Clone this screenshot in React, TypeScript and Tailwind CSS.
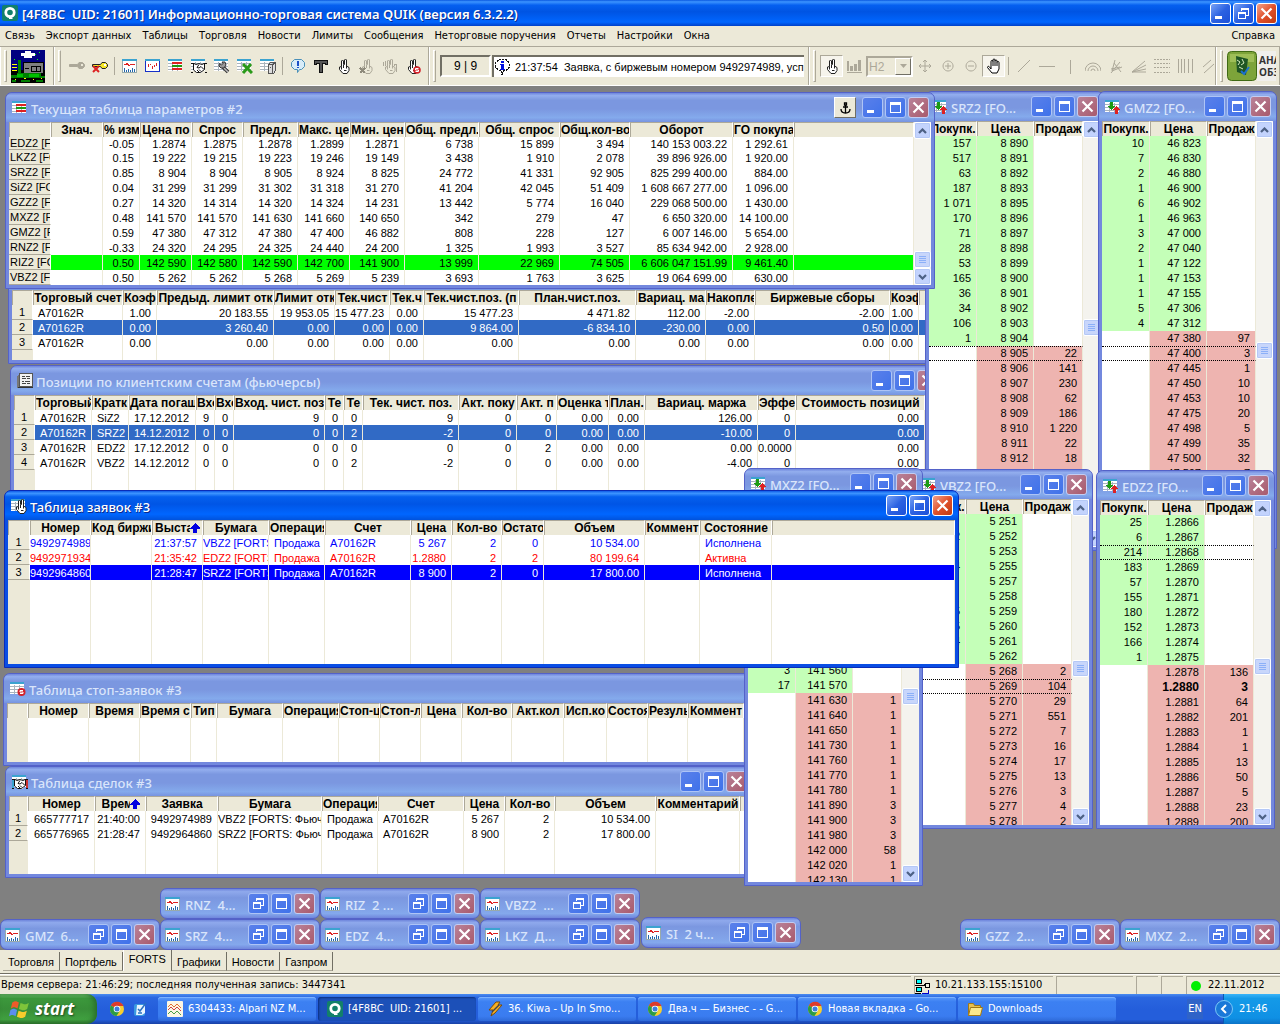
import type { ReactNode } from "react";

type Align = "left" | "right" | "flush";
type Col = { label: ReactNode; w: string; align?: Align };
type Row = { cells: string[]; tone?: string };

const UI = "font-['DejaVu_Sans_Condensed','Noto_Sans',sans-serif]";
const GRID = "font-['Liberation_Sans',Arial,sans-serif]";

/* ---------- icons ---------- */

function Svg({ children, s = "size-4", vb = "0 0 16 16" }: { children: ReactNode; s?: string; vb?: string }) {
  return (
    <svg viewBox={vb} className={`${s} shrink-0`} fill="none" shapeRendering="crispEdges" aria-hidden>
      {children}
    </svg>
  );
}

function Sheet() {
  return (
    <>
      <path fill="#fff" d="M0 1h14v12H0z" />
      <path fill="#3ba3d0" d="M0 1h14v2H0z" />
      <path stroke="#a9b4bd" d="M0 5.500h14M0 8.500h14M0 11.500h14M4.500 4v9M9.500 4v9" />
    </>
  );
}

const ParamsIcon = () => (
  <Svg>
    <Sheet />
    <path fill="#d22" d="M4 4h10v2H4zM4 10h10v2H4z" />
    <path fill="#1c9a12" d="M4 7h10v2H4z" />
  </Svg>
);

const ChartIcon = () => (
  <Svg>
    <path fill="#fff" stroke="#9aa" d="M.5 1.500h14v13H.5z" />
    <path fill="#3ba3d0" d="M0 1h15v2H0z" />
    <path stroke="#d22" d="M2 6.500h2l1-1 2 2 2-1h4" />
    <path stroke="#26a" d="M2.500 10v4M4.500 12v2M6.500 11v3M8.500 12v2M10.500 10v4M12.500 11v3" />
  </Svg>
);

const QuoteIcon = () => (
  <Svg>
    <Sheet />
    <path fill="#1c9a12" d="M5 3h3v4h2l-3.500 4L3 7h2z" />
    <path fill="#d22" d="M10 15h3v-4h2l-3.500-4L8 11h2z" />
  </Svg>
);

const PositionsIcon = () => (
  <Svg>
    <path fill="#777" d="M0 3l3-3v12l-3 4z" />
    <path fill="#333" d="M0 15l3-2h13v2z" />
    <path fill="#f2f2f2" stroke="#555" d="M2.500.5h13v13h-13z" />
    <path stroke="#444" d="M5 3.500h3M9 3.500h4M5 5.500h4M10 5.500h3M5 8.500h2M8 8.500h5M5 10.500h4M10 10.500h3" />
  </Svg>
);

const Fingers = ({ fill = "#fff", stroke = "#222" }: { fill?: string; stroke?: string }) => (
  <>
    <path
      fill={fill}
      stroke={stroke}
      shapeRendering="auto"
      d="M5.500 8.500V3l1-1 1 1v3.500h1V2l1-1 1 1v6l2.500 1.500v3L11 15.500H7L3.500 11.500V9z"
    />
    <path stroke={stroke} shapeRendering="auto" d="M5.500 8.500v3M7.500 7v3M10.500 8v2.500M8 12.500h2.500" />
  </>
);

const OrdersIcon = () => (
  <Svg>
    <Sheet />
    <g transform="translate(2 0)">
      <Fingers />
    </g>
  </Svg>
);

const StopIcon = () => (
  <Svg>
    <Sheet />
    <circle cx="11.500" cy="11" r="4" fill="#d3222a" shapeRendering="auto" />
    <path stroke="#fff" d="M13 9.500h-3v1.500h3v1.500h-3" shapeRendering="auto" />
  </Svg>
);

const DealIcon = ({ bare = false }: { bare?: boolean }) => (
  <Svg>
    <Sheet />
    <path fill="#fff" d="M2 7l3-1 3-1 3 1 3 1v5l-4 3H6l-4-3z" />
    <path
      stroke="#111"
      shapeRendering="auto"
      d="M0 5.500h3l2 1 3-1 3 1 2-1h3M0 14.500h2M14 14.500h2M2.500 6v6l3 2.500h4l4-3V6M8 6.500l-2 3 2 .5 2-1.500 3 3M6 12l2 2M8 11.500l2 2"
    />
    {!bare && <path fill="#3ba3d0" d="M0 6h2v8H0z" />}
    {!bare && <path fill="#c33" d="M14 6h2v8h-2z" />}
  </Svg>
);

const Key = ({ color, x = false }: { color: string; x?: boolean }) => (
  <Svg s="size-[18px]" vb="0 0 18 18">
    <path fill={color} stroke={x ? "#222" : color} shapeRendering="auto" d="M11 5.500h3.500l2 2v2l-2 2H11L9.500 9.500h-8v-2h8z" />
    <path fill={x ? "#fff" : "#ece9d8"} d="M13 7h2v2h-2z" />
    {x && <path stroke="#d22" strokeWidth="2" shapeRendering="auto" d="M2 9l6 6M8 9l-6 6" />}
  </Svg>
);

const ToolHand = ({ fill, stroke, children }: { fill?: string; stroke?: string; children?: ReactNode }) => (
  <Svg>
    <Fingers fill={fill} stroke={stroke} />
    {children}
  </Svg>
);

const Chrome = () => (
  <svg viewBox="0 0 16 16" className="size-4 shrink-0" aria-hidden>
    <circle cx="8" cy="8" r="7" fill="#f7cf2f" />
    <path d="M8 8L1.900 4.500A7 7 0 0 1 14.500 5H8z" fill="#dd3b2b" />
    <path d="M8 8L1.900 4.500A7 7 0 0 0 7.500 15L11 9.500z" fill="#2c9c46" />
    <circle cx="8" cy="8" r="3.300" fill="#fff" />
    <circle cx="8" cy="8" r="2.500" fill="#3c7ee0" />
  </svg>
);

const Quik = () => (
  <svg viewBox="0 0 16 16" className="size-4 shrink-0" aria-hidden>
    <rect width="16" height="16" rx="2" fill="#12806a" />
    <circle cx="8" cy="7.500" r="4.200" fill="none" stroke="#fff" strokeWidth="2.800" />
    <path d="M7 10l4 4H7z" fill="#fff" />
  </svg>
);

/* ---------- window chrome ---------- */

type Glyph = "min" | "max" | "restore" | "close";
const glyphNames = { min: "Свернуть", max: "Развернуть", restore: "Восстановить", close: "Закрыть" };

function WinButton({ kind, active = false }: { kind: Glyph; active?: boolean }) {
  const tone =
    kind === "close"
      ? active
        ? "border-white bg-linear-to-br from-[#f0a088] via-[#e0502a] to-[#c03a10]"
        : "border-[#c3cdf3] bg-linear-to-br from-[#b98299] to-[#a85a6c]"
      : active
        ? "border-white bg-linear-to-br from-[#7aa2f5] via-[#2c62e2] to-[#1c50d8]"
        : "border-[#aec4f6] bg-linear-to-br from-[#5a80ea] to-[#3f72ea]";
  return (
    <button
      type="button"
      aria-label={glyphNames[kind]}
      className={`flex size-[21px] shrink-0 items-center justify-center rounded-[3px] border ${tone}`}
    >
      <svg viewBox="0 0 19 19" className="size-[19px]" fill="none" stroke="#fff" aria-hidden>
        {kind === "min" && <path strokeWidth="3" d="M4 13.500h7" />}
        {kind === "max" && <path strokeWidth="1" shapeRendering="crispEdges" d="M4.500 4.500h10v10h-10zM4 5.500h11M4 6.500h11" />}
        {kind === "restore" && (
          <path strokeWidth="1" shapeRendering="crispEdges" d="M7.500 7V4.500h7v7H12M7 5.500h8M4.500 8.500h7v6h-7zM4 9.500h8" />
        )}
        {kind === "close" && <path strokeWidth="2.200" d="M4.500 4.500l10 10M14.500 4.500l-10 10" />}
      </svg>
    </button>
  );
}

type WindowProps = {
  title: string;
  icon: ReactNode;
  place: string;
  active?: boolean;
  buttons?: Glyph[];
  extra?: ReactNode;
  children: ReactNode;
};

function MdiWindow({ title, icon, place, active = false, buttons = ["min", "max", "close"], extra, children }: WindowProps) {
  const frame = active ? "border-[#0a2cb8] bg-[#0a4ee4]" : "border-[#5462c8] bg-[#7388de]";
  const bar = active
    ? "bg-[linear-gradient(#0f5be8,#3d95ff_8%,#0560ee_20%,#0055e5_45%,#0066ff_80%,#0052dc)] text-white [text-shadow:1px_1px_#0a2a8c]"
    : "bg-[linear-gradient(#6f86dc,#93aeee_9%,#7b97e0_25%,#7b97e0_55%,#84aaec_85%,#7793e0)] text-[#d9e5fb]";
  return (
    <section className={`absolute flex flex-col overflow-hidden rounded-t-[7px] border ${frame} ${place}`}>
      <header className={`flex h-[29px] shrink-0 items-center gap-[2px] pr-[5px] pl-[6px] ${bar}`}>
        {icon}
        <h2 className="ml-px min-w-0 flex-1 overflow-hidden pt-[2px] font-['Noto_Sans',sans-serif] text-[13px] leading-[20px] font-medium whitespace-pre">
          {title}
        </h2>
        {extra}
        {buttons.map((b) => (
          <WinButton key={b} kind={b} active={active} />
        ))}
      </header>
      <div className="mx-[3px] mb-[3px] flex min-h-0 flex-1 overflow-hidden bg-white">{children}</div>
    </section>
  );
}

function Minimized({ title, place }: { title: string; place: string }) {
  return (
    <section
      className={`absolute flex h-[31px] w-[160px] items-center gap-[2px] rounded-[7px] border border-[#5462c8] bg-[linear-gradient(#6f86dc,#8fa9ec_9%,#7b97e0_30%,#84a8ec_85%,#7086dc)] pr-[4px] pl-[4px] ${place}`}
    >
      <ChartIcon />
      <h2 className="ml-[2px] min-w-0 flex-1 overflow-hidden pt-[2px] font-['Noto_Sans',sans-serif] text-[13px] leading-[20px] font-medium whitespace-pre text-[#d9e5fb]">
        {title}
      </h2>
      <WinButton kind="restore" />
      <WinButton kind="max" />
      <WinButton kind="close" />
    </section>
  );
}

function ScrollArrow({ down = false }: { down?: boolean }) {
  return (
    <button
      type="button"
      aria-label={down ? "Вниз" : "Вверх"}
      className="flex h-[17px] w-full shrink-0 items-center justify-center rounded-[2px] border border-white bg-[#c3d3fd] shadow-[inset_0_0_0_1px_#b4c8f6]"
    >
      <svg viewBox="0 0 9 6" className="h-[6px] w-[9px]" fill="none" stroke="#4d6185" strokeWidth="2.200" aria-hidden>
        <path d={down ? "M1 1l3.500 3.500L8 1" : "M1 5l3.500-3.500L8 5"} />
      </svg>
    </button>
  );
}

function ScrollBar({ lead }: { lead: string }) {
  return (
    <div className="flex w-[17px] shrink-0 flex-col bg-[#f4f3ee]">
      <ScrollArrow />
      <div className={`shrink-0 ${lead}`} />
      <div className="flex h-[17px] shrink-0 flex-col items-center justify-center gap-px rounded-[2px] border border-white bg-[#c8d6fb] shadow-[inset_0_0_0_1px_#b4c8f6]">
        <i className="h-px w-[7px] bg-[#8cb0f8]" />
        <i className="h-px w-[7px] bg-[#8cb0f8]" />
        <i className="h-px w-[7px] bg-[#8cb0f8]" />
        <i className="h-px w-[7px] bg-[#8cb0f8]" />
      </div>
      <div className="min-h-0 flex-1" />
      <ScrollArrow down />
    </div>
  );
}

/* ---------- tables ---------- */

const headCell =
  "h-[15px] overflow-hidden border-t border-l border-r border-t-[#aca899] border-l-[#aca899] border-r-white bg-[#ece9d8] p-0 text-center text-[12px] leading-[13px] font-bold whitespace-pre text-black";

const cellAlign: Record<Align, string> = {
  left: "pl-[5px] text-left",
  right: "pr-[5px] text-right",
  flush: "text-left",
};

function DataTable({ cols, rows, named = false }: { cols: Col[]; rows: Row[]; named?: boolean }) {
  return (
    <table className={`h-full w-full min-w-0 flex-1 table-fixed border-separate border-spacing-0 text-[11px] ${GRID}`}>
      <colgroup>
        {cols.map((c, i) => (
          <col key={i} className={c.w} />
        ))}
      </colgroup>
      <thead>
        <tr>
          {cols.map((c, i) => (
            <th key={i} scope="col" className={headCell}>
              {c.label}
            </th>
          ))}
        </tr>
      </thead>
      <tbody>
        {rows.map((r, ri) => (
          <tr
            key={ri}
            className={`${named && ri === 0 ? "h-[13px] leading-[12px]" : "h-[15px] leading-[14px]"} ${r.tone ?? "text-black"}`}
          >
            <th
              scope="row"
              className={`overflow-hidden border-r border-b border-r-white border-b-[#aca899] bg-[#ece9d8] p-0 font-normal whitespace-pre text-black ${
                named ? "pl-px text-left" : "text-center"
              }`}
            >
              {named ? r.cells[0] : ri + 1}
            </th>
            {cols.slice(1).map((c, ci) => (
              <td
                key={ci}
                className={`overflow-hidden border-r border-[#ece9d8] p-0 whitespace-pre ${cellAlign[c.align ?? "right"]}`}
              >
                {r.cells[named ? ci + 1 : ci] ?? ""}
              </td>
            ))}
          </tr>
        ))}
        <tr aria-hidden>
          {cols.map((_, i) => (
            <td key={i} className={i === 0 ? "bg-[#ece9d8] p-0" : "border-r border-[#ece9d8] p-0"} />
          ))}
        </tr>
      </tbody>
    </table>
  );
}

function Sorted({ text, w }: { text: string; w: string }) {
  return (
    <span className="flex items-center justify-center">
      <span className={`overflow-hidden ${w}`}>{text}</span>
      <Svg s="size-[10px]" vb="0 0 10 10">
        <path fill="#0000e0" d="M5 0l5 5v1H7v4H3V6H0V5z" />
      </Svg>
    </span>
  );
}

const paramCols: Col[] = [
  { label: "", w: "w-[42px]" },
  { label: "Знач.", w: "w-[52px]" },
  { label: "% изм", w: "w-[37px]" },
  { label: "Цена по", w: "w-[52px]" },
  { label: "Спрос", w: "w-[51px]" },
  { label: "Предл.", w: "w-[55px]" },
  { label: "Макс. це", w: "w-[52px]" },
  { label: "Мин. цен", w: "w-[55px]" },
  { label: "Общ. предл.", w: "w-[74px]" },
  { label: "Общ. спрос", w: "w-[81px]" },
  { label: "Общ.кол-во", w: "w-[70px]" },
  { label: "Оборот", w: "w-[103px]" },
  { label: "ГО покупа", w: "w-[61px]" },
  { label: "", w: "w-auto" },
];

const paramRows: Row[] = [
  ["EDZ2 [FO", "", "-0.05", "1.2874", "1.2875", "1.2878", "1.2899", "1.2871", "6 738", "15 899", "3 494", "140 153 003.22", "1 292.61"],
  ["LKZ2 [FO", "", "0.15", "19 222", "19 215", "19 223", "19 246", "19 149", "3 438", "1 910", "2 078", "39 896 926.00", "1 920.00"],
  ["SRZ2 [FO", "", "0.85", "8 904", "8 904", "8 905", "8 924", "8 825", "24 772", "41 331", "92 905", "825 299 400.00", "884.00"],
  ["SiZ2 [FO", "", "0.04", "31 299", "31 299", "31 302", "31 318", "31 270", "41 204", "42 045", "51 409", "1 608 667 277.00", "1 096.00"],
  ["GZZ2 [FO", "", "0.27", "14 320", "14 314", "14 320", "14 324", "14 231", "13 442", "5 774", "16 040", "229 068 500.00", "1 430.00"],
  ["MXZ2 [FO", "", "0.48", "141 570", "141 570", "141 630", "141 660", "140 650", "342", "279", "47", "6 650 320.00", "14 100.00"],
  ["GMZ2 [FO", "", "0.59", "47 380", "47 312", "47 380", "47 400", "46 882", "808", "228", "127", "6 007 146.00", "5 654.00"],
  ["RNZ2 [FO", "", "-0.33", "24 320", "24 295", "24 325", "24 440", "24 200", "1 325", "1 993", "3 527", "85 634 942.00", "2 928.00"],
  ["RIZ2 [FO", "", "0.50", "142 590", "142 580", "142 590", "142 700", "141 900", "13 999", "22 969", "74 505", "6 606 047 151.99", "9 461.40"],
  ["VBZ2 [FO", "", "0.50", "5 262", "5 262", "5 268", "5 269", "5 239", "3 693", "1 763", "3 625", "19 064 699.00", "630.00"],
].map((cells, i) => ({ cells, tone: i === 8 ? "bg-[#00ff00]" : undefined }));

const limitCols: Col[] = [
  { label: "", w: "w-[21px]" },
  { label: "Торговый счет", w: "w-[90px]", align: "left" },
  { label: "Коэф", w: "w-[34px]" },
  { label: "Предыд. лимит отк", w: "w-[117px]" },
  { label: "Лимит отк", w: "w-[61px]" },
  { label: "Тек.чист", w: "w-[55px]" },
  { label: "Тек.ч", w: "w-[34px]" },
  { label: "Тек.чист.поз. (п", w: "w-[95px]" },
  { label: "План.чист.поз.", w: "w-[117px]" },
  { label: "Вариац. ма", w: "w-[70px]" },
  { label: "Накопле", w: "w-[49px]" },
  { label: "Биржевые сборы", w: "w-[135px]" },
  { label: "Коэф", w: "w-[29px]" },
  { label: "", w: "w-auto" },
];

const limitRows: Row[] = [
  { cells: ["A70162R", "1.00", "20 183.55", "19 953.05", "15 477.23", "0.00", "15 477.23", "4 471.82", "112.00", "-2.00", "-2.00", "1.00"] },
  {
    cells: ["A70162R", "0.00", "3 260.40", "0.00", "0.00", "0.00", "9 864.00", "-6 834.10", "-230.00", "0.00", "0.50", "0.00"],
    tone: "bg-[#316ac5] text-white",
  },
  { cells: ["A70162R", "0.00", "0.00", "0.00", "0.00", "0.00", "0.00", "0.00", "0.00", "0.00", "0.00", "0.00"] },
];

const positionCols: Col[] = [
  { label: "", w: "w-[21px]" },
  { label: "Торговый", w: "w-[57px]", align: "left" },
  { label: "Кратк", w: "w-[37px]", align: "left" },
  { label: "Дата погаш", w: "w-[67px]", align: "left" },
  { label: "Вхо", w: "w-[19px]" },
  { label: "Вхо", w: "w-[19px]" },
  { label: "Вход. чист. поз", w: "w-[91px]" },
  { label: "Те", w: "w-[19px]" },
  { label: "Те", w: "w-[19px]" },
  { label: "Тек. чист. поз.", w: "w-[96px]" },
  { label: "Акт. поку", w: "w-[58px]" },
  { label: "Акт. п", w: "w-[40px]" },
  { label: "Оценка т", w: "w-[52px]" },
  { label: "План.", w: "w-[36px]" },
  { label: "Вариац. маржа", w: "w-[113px]" },
  { label: "Эффек", w: "w-[38px]" },
  { label: "Стоимость позиций", w: "w-[129px]" },
  { label: "", w: "w-auto" },
];

const positionRows: Row[] = [
  { cells: ["A70162R", "SiZ2", "17.12.2012", "9", "0", "9", "0", "0", "9", "0", "0", "0.00", "0.00", "126.00", "0", "0.00"] },
  {
    cells: ["A70162R", "SRZ2", "14.12.2012", "0", "0", "0", "0", "2", "-2", "0", "0", "0.00", "0.00", "-10.00", "0", "0.00"],
    tone: "bg-[#316ac5] text-white",
  },
  { cells: ["A70162R", "EDZ2", "17.12.2012", "0", "0", "0", "0", "0", "0", "0", "2", "0.00", "0.00", "0.00", "0.0000", "0.00"] },
  { cells: ["A70162R", "VBZ2", "14.12.2012", "0", "0", "0", "0", "2", "-2", "0", "0", "0.00", "0.00", "-4.00", "0", "0.00"] },
];

const orderCols: Col[] = [
  { label: "", w: "w-[22px]" },
  { label: "Номер", w: "w-[61px]", align: "flush" },
  { label: "Код биржи", w: "w-[61px]" },
  { label: <Sorted text="Выста" w="w-[35px]" />, w: "w-[51px]" },
  { label: "Бумага", w: "w-[66px]", align: "flush" },
  { label: "Операция", w: "w-[56px]", align: "left" },
  { label: "Счет", w: "w-[86px]", align: "left" },
  { label: "Цена", w: "w-[41px]" },
  { label: "Кол-во", w: "w-[50px]" },
  { label: "Остато", w: "w-[42px]" },
  { label: "Объем", w: "w-[101px]" },
  { label: "Коммент", w: "w-[55px]" },
  { label: "Состояние", w: "w-[72px]", align: "left" },
  { label: "", w: "w-auto" },
];

const orderRows: Row[] = [
  {
    cells: ["9492974989", "", "21:37:57", "VBZ2 [FORTS", "Продажа", "A70162R", "5 267", "2", "0", "10 534.00", "", "Исполнена"],
    tone: "text-[#0000ff]",
  },
  {
    cells: ["9492971934", "", "21:35:42", "EDZ2 [FORTS", "Продажа", "A70162R", "1.2880", "2", "2", "80 199.64", "", "Активна"],
    tone: "text-[#ff0000]",
  },
  {
    cells: ["9492964860", "", "21:28:47", "SRZ2 [FORTS", "Продажа", "A70162R", "8 900", "2", "0", "17 800.00", "", "Исполнена"],
    tone: "bg-[#0000ff] text-white",
  },
];

const stopCols: Col[] = [
  { label: "", w: "w-[21px]" },
  { label: "Номер", w: "w-[61px]" },
  { label: "Время", w: "w-[51px]" },
  { label: "Время с", w: "w-[51px]" },
  { label: "Тип", w: "w-[26px]" },
  { label: "Бумага", w: "w-[66px]" },
  { label: "Операция", w: "w-[56px]" },
  { label: "Стоп-ц", w: "w-[41px]" },
  { label: "Стоп-л", w: "w-[41px]" },
  { label: "Цена", w: "w-[41px]" },
  { label: "Кол-во", w: "w-[50px]" },
  { label: "Акт.кол", w: "w-[52px]" },
  { label: "Исп.ко", w: "w-[43px]" },
  { label: "Состоя", w: "w-[41px]" },
  { label: "Резуль", w: "w-[40px]" },
  { label: "Коммент", w: "w-[56px]" },
  { label: "", w: "w-auto" },
];

const dealCols: Col[] = [
  { label: "", w: "w-[19px]" },
  { label: "Номер", w: "w-[67px]" },
  { label: <Sorted text="Время" w="w-[28px]" />, w: "w-[51px]" },
  { label: "Заявка", w: "w-[72px]" },
  { label: "Бумага", w: "w-[104px]", align: "flush" },
  { label: "Операция", w: "w-[56px]", align: "left" },
  { label: "Счет", w: "w-[86px]", align: "left" },
  { label: "Цена", w: "w-[41px]" },
  { label: "Кол-во", w: "w-[50px]" },
  { label: "Объем", w: "w-[101px]" },
  { label: "Комментарий", w: "w-[84px]" },
  { label: "", w: "w-auto" },
];

const dealRows: Row[] = [
  { cells: ["665777717", "21:40:00", "9492974989", "VBZ2 [FORTS: Фьюч", "Продажа", "A70162R", "5 267", "2", "10 534.00", ""] },
  { cells: ["665776965", "21:28:47", "9492964860", "SRZ2 [FORTS: Фьюч", "Продажа", "A70162R", "8 900", "2", "17 800.00", ""] },
];

/* ---------- order books ---------- */

type Quote = [buy: string, price: string, sell: string];
type Book = { bids: Quote[]; asks: Quote[]; marked?: string; strong?: string };

const bid = (buy: string, price: string): Quote => [buy, price, ""];
const ask = (price: string, sell: string): Quote => ["", price, sell];

const books: Record<string, Book> = {
  SRZ2: {
    bids: [
      bid("157", "8 890"), bid("517", "8 891"), bid("63", "8 892"), bid("187", "8 893"), bid("1 071", "8 895"),
      bid("170", "8 896"), bid("71", "8 897"), bid("28", "8 898"), bid("53", "8 899"), bid("165", "8 900"),
      bid("36", "8 901"), bid("34", "8 902"), bid("106", "8 903"), bid("1", "8 904"),
    ],
    asks: [
      ask("8 905", "22"), ask("8 906", "141"), ask("8 907", "230"), ask("8 908", "62"), ask("8 909", "186"),
      ask("8 910", "1 220"), ask("8 911", "22"), ask("8 912", "18"), ask("", ""),
    ],
    marked: "8 905",
  },
  GMZ2: {
    bids: [
      bid("10", "46 823"), bid("7", "46 830"), bid("2", "46 880"), bid("1", "46 900"), bid("6", "46 902"),
      bid("1", "46 963"), bid("3", "47 000"), bid("2", "47 040"), bid("1", "47 122"), bid("1", "47 153"),
      bid("1", "47 155"), bid("5", "47 306"), bid("4", "47 312"),
    ],
    asks: [
      ask("47 380", "97"), ask("47 400", "3"), ask("47 445", "1"), ask("47 450", "10"), ask("47 453", "10"),
      ask("47 475", "20"), ask("47 498", "5"), ask("47 499", "35"), ask("47 500", "32"), ask("47 507", "7"),
    ],
    marked: "47 400",
  },
  VBZ2: {
    bids: [
      bid("", "5 251"), bid("2", "5 252"), bid("", "5 253"), bid("4", "5 255"), bid("", "5 257"),
      bid("", "5 258"), bid("5", "5 259"), bid("5", "5 260"), bid("4", "5 261"), bid("", "5 262"),
    ],
    asks: [
      ask("5 268", "2"), ask("5 269", "104"), ask("5 270", "29"), ask("5 271", "551"), ask("5 272", "7"),
      ask("5 273", "16"), ask("5 274", "17"), ask("5 275", "13"), ask("5 276", "3"), ask("5 277", "4"), ask("5 278", "2"),
    ],
    marked: "5 269",
  },
  EDZ2: {
    bids: [
      bid("25", "1.2866"), bid("6", "1.2867"), bid("214", "1.2868"), bid("183", "1.2869"), bid("57", "1.2870"),
      bid("155", "1.2871"), bid("180", "1.2872"), bid("152", "1.2873"), bid("166", "1.2874"), bid("1", "1.2875"),
    ],
    asks: [
      ask("1.2878", "136"), ask("1.2880", "3"), ask("1.2881", "64"), ask("1.2882", "201"), ask("1.2883", "1"),
      ask("1.2884", "1"), ask("1.2885", "13"), ask("1.2886", "50"), ask("1.2887", "5"), ask("1.2888", "23"), ask("1.2889", "200"),
    ],
    marked: "1.2868",
    strong: "1.2880",
  },
  MXZ2: {
    bids: [
      ...Array.from({ length: 10 }, () => bid("", "")),
      bid("3", "141 560"), bid("17", "141 570"),
    ],
    asks: [
      ask("141 630", "1"), ask("141 640", "1"), ask("141 650", "1"), ask("141 730", "1"), ask("141 760", "1"),
      ask("141 770", "1"), ask("141 780", "1"), ask("141 890", "3"), ask("141 900", "3"), ask("141 980", "3"),
      ask("142 000", "58"), ask("142 020", "1"), ask("142 130", "1"),
    ],
  },
};

function QuoteTable({ book }: { book: Book }) {
  const line = (q: Quote, i: number, isBid: boolean) => {
    const mark = q[1] !== "" && q[1] === book.marked ? "border-y border-y-black [border-top-style:dotted] [border-bottom-style:dotted]" : "";
    const bold = q[1] !== "" && q[1] === book.strong ? "text-[12px] font-bold" : "";
    const cell = `h-[15px] overflow-hidden border-r border-r-[#ece9d8] p-0 pr-[5px] text-right whitespace-pre ${mark}`;
    const shade = isBid ? "bg-[#c4ffb8]" : "bg-[#eeb4b0]";
    return (
      <tr key={`${isBid}${i}`} className={bold}>
        <td className={`${cell} ${isBid ? shade : ""}`}>{q[0]}</td>
        <td className={`${cell} ${shade}`}>{q[1]}</td>
        <td className={`${cell} ${isBid ? "" : shade}`}>{q[2]}</td>
      </tr>
    );
  };
  return (
    <div className="min-h-0 min-w-0 flex-1 overflow-hidden">
      <table className={`w-full table-fixed border-separate border-spacing-0 text-[11px] leading-[13px] text-black ${GRID}`}>
        <colgroup>
          <col className="w-[48px]" />
          <col />
          <col className="w-[49px]" />
        </colgroup>
        <thead>
          <tr>
            <th scope="col" className={headCell}>Покупк.</th>
            <th scope="col" className={headCell}>Цена</th>
            <th scope="col" className={headCell}>Продаж</th>
          </tr>
        </thead>
        <tbody>
          {book.bids.map((q, i) => line(q, i, true))}
          {book.asks.map((q, i) => line(q, i, false))}
        </tbody>
      </table>
    </div>
  );
}

function QuoteWindow({ name, place, lead }: { name: string; place: string; lead: string }) {
  return (
    <MdiWindow title={`${name} [FO...`} icon={<QuoteIcon />} place={place}>
      <QuoteTable book={books[name]} />
      <ScrollBar lead={lead} />
    </MdiWindow>
  );
}

/* ---------- toolbar ---------- */

const Sep = () => <i className="mx-[3px] h-[18px] w-px shrink-0 bg-[#aca899]" />;

function Grip() {
  return <i className="mr-[4px] h-[32px] w-[3px] shrink-0 border border-t-white border-r-[#aca899] border-b-[#aca899] border-l-white" />;
}

function Band({ children, grow = false }: { children: ReactNode; grow?: boolean }) {
  return (
    <div
      className={`flex h-[38px] items-center overflow-hidden border-r border-l border-r-[#aca899] border-l-white pl-[3px] ${
        grow ? "min-w-0 flex-1" : "shrink-0"
      }`}
    >
      <Grip />
      {children}
    </div>
  );
}

function Tool({ name, children, pressed = false }: { name: string; children: ReactNode; pressed?: boolean }) {
  return (
    <button
      type="button"
      aria-label={name}
      className={`flex h-[22px] w-[23px] shrink-0 items-center justify-center ${
        pressed ? "border border-t-[#aca899] border-r-white border-b-white border-l-[#aca899] bg-[#f6f4ec]" : ""
      }`}
    >
      {children}
    </button>
  );
}

const Gray = ({ d, dash }: { d: string; dash?: string }) => (
  <svg viewBox="0 0 16 16" className="size-4" fill="none" stroke="#aca899" aria-hidden>
    <path d={d} strokeDasharray={dash} />
  </svg>
);

const drawTools: [name: string, d: string, dash?: string][] = [
  ["Линия", "M2 14L14 2"],
  ["Горизонтальная линия", "M0 8.500h16"],
  ["Вертикальная линия", "M8.500 2v14"],
  ["Дуги Фибоначчи", "M0 13a8 8 0 0 1 16 0M3 13a5 5 0 0 1 10 0M6 13a2 2 0 0 1 4 0"],
  ["Веер Фибоначчи", "M3 15L12 4M4 13L7 2M4 13L14 9M6 5l7 9M3 11l9-2"],
  ["Веер Ганна", "M1 14L14 3M1 14L15 7M1 14L15 11M1 14h14"],
  ["Уровни Фибоначчи", "M0 1.500h16M0 5.500h16M0 9.500h16M0 14.500h16", "2 1"],
  ["Зоны Фибоначчи", "M1.500 1v14M4.500 1v14M7.500 1v14M11.500 1v14M15.500 1v14"],
  ["Канал", "M3 9l8-7M4 15L14 6"],
];

function Toolbar() {
  return (
    <div className="flex h-[40px] shrink-0 items-center overflow-hidden border-t border-b border-t-[#aca899] border-b-white bg-[#ece9d8]">
      <Band>
        <svg viewBox="0 0 34 33" className="mr-[8px] h-[33px] w-[34px]" shapeRendering="crispEdges" aria-hidden>
          <path fill="#000080" d="M0 0h34v22H0z" />
          <path fill="#000" d="M0 20h34v13H0z" />
          <path fill="#fff" d="M10 3h4V1h6v2h4v3h-3v2h-8V6h-3z" />
          <path fill="#0f0" d="M24 4h1v1h-1zM28 2h1v1h-1zM26 9h1v1h-1zM3 9h1v1H3z" />
          <path fill="#808080" d="M12 12h21v12H12z" />
          <path fill="none" stroke="#000" d="M12.500 12.500h20v11h-20zM20.500 16.500h9v5h-9zM25.500 16v6M14 18.500h4" />
          <path fill="#ffff00" d="M1 14h5v1H1zM1 17h5v1H1zM1 20h5v1H1z" />
          <path fill="#008000" d="M7 10h3v14H7zM0 25h6v-2h24v3h4v2H0z" />
          <path fill="#00c000" d="M6 24h6v3H6zM18 24h10v3H18z" />
          <path fill="#ffff00" d="M4 29h1v1H4zM13 28h2v1h-2zM22 29h1v1h-1zM30 28h1v1h-1z" />
          <path fill="#008000" d="M1 30h4v2H1zM10 30h9v2h-9zM25 30h7v2h-7z" />
        </svg>
      </Band>
      <Band>
        <Tool name="Подключиться"><Key color="#aca899" /></Tool>
        <Tool name="Отключиться"><Key color="#f4e626" x /></Tool>
        <Sep />
        <Tool name="График"><ChartIcon /></Tool>
        <Tool name="Котировки">
          <Svg>
            <path fill="#fff" stroke="#1630c8" d="M.5 2.500h14v11H.5z" />
            <path fill="#3ba3d0" d="M0 1h15v2H0z" />
            <path stroke="#d22" d="M3.500 6v3M5.500 6v1M7.500 8v3M9.500 7v2M11.500 5v3" />
          </Svg>
        </Tool>
        <Tool name="Таблица параметров"><ParamsIcon /></Tool>
        <Tool name="Сделки"><DealIcon bare /></Tool>
        <Tool name="Настройка таблицы">
          <Svg>
            <Sheet />
            <path stroke="#333" strokeWidth="3.500" d="M8 8l6 6" shapeRendering="auto" />
            <path stroke="#bbb" strokeWidth="1.500" d="M8 8l6 6" shapeRendering="auto" />
            <path fill="#999" stroke="#333" shapeRendering="auto" d="M5.500 5.500l2 1.500 1.500-1.500L8 4h3l1 3-2 3H7L5 8z" />
          </Svg>
        </Tool>
        <Tool name="Экспорт в Excel">
          <Svg>
            <Sheet />
            <path stroke="#2a9a1a" strokeWidth="3" d="M6 6l9 9M14 6l-8 9" shapeRendering="auto" />
          </Svg>
        </Tool>
        <Tool name="Экспорт в базу">
          <Svg>
            <Sheet />
            <path fill="#ddd" stroke="#555" d="M8.500 6.500l2-2h5v8l-2 3h-5zM12.500 6.500v9M9 6.500h4l2-2M10 9.500h1" />
          </Svg>
        </Tool>
        <Sep />
        <Tool name="Сообщения">
          <Svg>
            <path fill="#d8ecf8" stroke="#4a90b8" shapeRendering="auto" d="M4.500 1.500h7l3 3v4l-3 3h-2l-2 3v-3h-3l-3-3v-4z" />
            <path fill="#1a50c8" d="M7 3h2v5H7zM7 9h2v1H7z" />
          </Svg>
        </Tool>
        <Tool name="Текст">
          <Svg>
            <path fill="#555" stroke="#111" d="M1.500 2.500h13v4h-2v-1h-3v9h-3v-9h-3v1h-2z" />
          </Svg>
        </Tool>
        <Tool name="Заявка"><ToolHand /></Tool>
        <Tool name="Снять заявку">
          <ToolHand fill="#ece9d8" stroke="#aca899"><path stroke="#8f8b7c" strokeWidth="2" d="M1 10l5 5M6 10l-5 5" /></ToolHand>
        </Tool>
        <Tool name="Заменить заявку">
          <ToolHand fill="#ece9d8" stroke="#aca899"><path stroke="#aca899" d="M1.500 8V3.500M3.500 8V2.500M12.500 8V6.500h2v7" /></ToolHand>
        </Tool>
        <Tool name="Стоп-заявка">
          <ToolHand>
            <circle cx="12" cy="12" r="3.800" fill="#d3222a" shapeRendering="auto" />
            <path stroke="#fff" d="M13.500 10.500h-3V12h3v1.500h-3" shapeRendering="auto" />
          </ToolHand>
        </Tool>
        <i className="w-[4px]" />
      </Band>
      <Band>
        <div className={`flex h-[22px] w-[51px] items-center justify-center border-2 border-t-[#716f64] border-r-white border-b-white border-l-[#716f64] text-[12px] whitespace-pre ${GRID}`}>
          9 | 9
        </div>
        <div className={`ml-px flex h-[22px] w-[312px] items-center overflow-hidden border-t-2 border-l-2 border-[#716f64] bg-white text-[11px] whitespace-pre ${GRID}`}>
          <Svg s="size-[17px]">
            <path fill="#fff" stroke="#111" strokeDasharray="2 1" d="M4.500.5h7l3 3v4l-3 3h-2l-2 4-1-4h-2l-3-3v-4z" />
            <path fill="#0010e0" d="M7 2h2v2H7zM6 5h3v4h1v1H6V9h1V6H6z" />
          </Svg>
          <span className="ml-[4px]">21:37:54  Заявка, с биржевым номером 9492974989, усп</span>
        </div>
        <i className="w-[4px]" />
      </Band>
      <Band grow>
        <Tool name="Указатель" pressed><ToolHand /></Tool>
        <Tool name="Тип графика">
          <Svg><path fill="#aca899" d="M0 3h2v10H0zM3 8h3v5H3zM7 6h3v7H7zM11 2h3v11h-3zM0 14h15v1H0z" /></Svg>
        </Tool>
        <label className="relative flex h-[21px] w-[47px] shrink-0 items-center">
          <select
            aria-label="Интервал"
            disabled
            className={`h-full w-full appearance-none border-2 border-t-[#aca899] border-r-white border-b-white border-l-[#aca899] pl-px text-[12px] text-[#aca899] ${GRID}`}
          >
            <option>H2</option>
          </select>
          <span className="pointer-events-none absolute right-[2px] flex h-[17px] w-[16px] items-center justify-center border border-t-white border-r-[#716f64] border-b-[#716f64] border-l-white bg-[#ece9d8]">
            <svg viewBox="0 0 7 4" className="h-[4px] w-[7px]" aria-hidden><path fill="#aca899" d="M0 0h7L3.500 4z" /></svg>
          </span>
        </label>
        <Tool name="Переместить"><Gray d="M8 2v12M2 8h12M6 4l2-2 2 2M6 12l2 2 2-2M4 6L2 8l2 2M12 6l2 2-2 2" /></Tool>
        <Tool name="Увеличить"><Gray d="M8 3a5 5 0 1 0 .1 0M5 8h6M8 5v6" /></Tool>
        <Tool name="Уменьшить"><Gray d="M8 3a5 5 0 1 0 .1 0M5 8h6" /></Tool>
        <Tool name="Рука" pressed>
          <svg viewBox="0 0 16 16" className="size-4" fill="#fff" stroke="#000" aria-hidden>
            <path d="M5 9V3.500a1 1 0 0 1 2 0V2a1 1 0 0 1 2 0v1a1 1 0 0 1 2 0v1.500a1 1 0 0 1 2 0V11l-2 4H6L1.500 9.500c0-1.500 1.500-1.500 2-.5L5 11zM7 3.500V8M9 3v5M11 4.500V8" />
          </svg>
        </Tool>
        <Sep />
        {drawTools.map(([name, d, dash]) => (
          <Tool key={name} name={name}><Gray d={d} dash={dash} /></Tool>
        ))}
      </Band>
      <Band>
        <svg viewBox="0 0 30 30" className="size-[30px] shrink-0" aria-hidden>
          <rect x=".5" y=".5" width="29" height="29" rx="4" fill="#7da43a" stroke="#3f6a14" />
          <path fill="#b4d06a" d="M3 3h24v8H3z" opacity=".6" />
          <path fill="#1f5524" d="M9 5l12 3-2 16-9-3z" />
          <path stroke="#d8ecc0" fill="none" d="M10 9l3 2-2 3M15 8l2 4-3 2M12 16l4 2" />
          <path stroke="#1c6fd0" strokeWidth="2" fill="none" d="M14 20l3 3 5-7" />
        </svg>
        <div className="flex h-[30px] w-[19px] shrink-0 flex-col justify-center overflow-hidden bg-[#f0efec] pl-[2px] font-['Open_Sans',sans-serif] text-[10px] leading-[12px] font-bold text-[#333]">
          <span>АНА</span>
          <span>ОБЗ</span>
        </div>
        <i className="w-[3px] shrink-0" />
      </Band>
    </div>
  );
}

/* ---------- page ---------- */

const menu = [
  "Связь", "Экспорт данных", "Таблицы", "Торговля", "Новости", "Лимиты", "Сообщения",
  "Неторговые поручения", "Отчеты", "Настройки", "Окна",
];

const tabs = ["Торговля", "Портфель", "FORTS", "Графики", "Новости", "Газпром"];

function TaskButton({ icon, label, pressed = false }: { icon: ReactNode; label: string; pressed?: boolean }) {
  return (
    <button
      type="button"
      className={`flex h-[24px] max-w-[158px] min-w-0 flex-1 items-center gap-[5px] rounded-[3px] pl-[9px] text-left text-[11px] whitespace-pre text-white ${
        pressed
          ? "bg-[#1c50b8] shadow-[inset_1px_1px_2px_#0c2f80]"
          : "bg-[linear-gradient(#5a9afa,#3c80f2_20%,#3a7cf0_80%,#2e6ad8)] shadow-[inset_0_1px_#7ab0ff]"
      }`}
    >
      {icon}
      <span className="min-w-0 overflow-hidden">{label}</span>
    </button>
  );
}

export default function App() {
  return (
    <div className={`flex h-screen flex-col overflow-hidden bg-[#ece9d8] text-[11px] text-black ${UI}`}>
      <header className="flex h-[26px] shrink-0 items-center gap-[2px] bg-[linear-gradient(#0a58e0,#3c94ff_7%,#0560f0_20%,#0054e3_45%,#0066ff_85%,#0040c8)] pr-[3px] pl-[2px]">
        <Quik />
        <h1 className="ml-[2px] flex-1 overflow-hidden pt-[2px] font-['Noto_Sans',sans-serif] text-[13px] leading-[20px] font-semibold whitespace-pre text-white [text-shadow:1px_1px_#0a2a8c]">
          [4F8BC  UID: 21601] Информационно-торговая система QUIK (версия 6.3.2.2)
        </h1>
        <WinButton kind="min" active />
        <WinButton kind="restore" active />
        <WinButton kind="close" active />
      </header>

      <nav className="flex h-[20px] shrink-0 items-center gap-[11px] px-[5px]">
        {menu.map((m) => (
          <button key={m} type="button" className="whitespace-nowrap">{m}</button>
        ))}
        <button type="button" className="ml-auto">Справка</button>
      </nav>

      <Toolbar />

      <main className="relative min-h-0 flex-1 overflow-hidden bg-[#808080]">
        <MdiWindow title="" icon={<PositionsIcon />} place="left-[8px] top-[174px] h-[104px] w-[936px]">
          <DataTable cols={limitCols} rows={limitRows} />
        </MdiWindow>
        <MdiWindow title="Позиции по клиентским счетам (фьючерсы)" icon={<PositionsIcon />} place="left-[10px] top-[279px] h-[155px] w-[934px]">
          <DataTable cols={positionCols} rows={positionRows} />
        </MdiWindow>
        <MdiWindow title="Таблица стоп-заявок #3" icon={<StopIcon />} place="left-[3px] top-[587px] h-[93px] w-[960px]">
          <DataTable cols={stopCols} rows={[]} />
        </MdiWindow>
        <MdiWindow title="Таблица сделок #3" icon={<DealIcon />} place="left-[5px] top-[680px] h-[112px] w-[748px]">
          <DataTable cols={dealCols} rows={dealRows} />
        </MdiWindow>
        <QuoteWindow name="SRZ2" place="left-[925px] top-[5px] h-[460px] w-[179px]" lead="h-[181px]" />
        <MdiWindow
          title="Текущая таблица параметров #2"
          icon={<ParamsIcon />}
          place="left-[5px] top-[6px] h-[197px] w-[930px]"
          extra={
            <button
              type="button"
              aria-label="Закрепить"
              className="mr-[4px] flex h-[21px] w-[22px] items-center justify-center border border-t-white border-r-[#716f64] border-b-[#716f64] border-l-white bg-[#ece9d8]"
            >
              <svg viewBox="0 0 11 12" className="h-[12px] w-[11px]" fill="none" stroke="#000" aria-hidden>
                <path strokeWidth="1.300" d="M5.500 3v8M3 5h5M1 7c0 3 2 4 4.500 4S10 10 10 7M4.500 1h2v2h-2z" />
              </svg>
            </button>
          }
        >
          <DataTable cols={paramCols} rows={paramRows} named />
          <ScrollBar lead="h-[112px]" />
        </MdiWindow>
        <QuoteWindow name="GMZ2" place="left-[1098px] top-[5px] h-[458px] w-[179px]" lead="h-[204px]" />
        <QuoteWindow name="VBZ2" place="left-[914px] top-[383px] h-[360px] w-[179px]" lead="h-[144px]" />
        <QuoteWindow name="EDZ2" place="left-[1096px] top-[384px] h-[359px] w-[179px]" lead="h-[141px]" />
        <QuoteWindow name="MXZ2" place="left-[744px] top-[382px] h-[418px] w-[179px]" lead="h-[173px]" />
        <MdiWindow title="Таблица заявок #3" icon={<OrdersIcon />} place="left-[4px] top-[404px] h-[178px] w-[955px]" active>
          <DataTable cols={orderCols} rows={orderRows} />
        </MdiWindow>

        <Minimized title="RNZ  4..." place="left-[160px] top-[802px]" />
        <Minimized title="RIZ  2 ..." place="left-[320px] top-[802px]" />
        <Minimized title="VBZ2  ..." place="left-[480px] top-[802px]" />
        <Minimized title="GMZ  6..." place="left-0 top-[833px]" />
        <Minimized title="SRZ  4..." place="left-[160px] top-[833px]" />
        <Minimized title="EDZ  4..." place="left-[320px] top-[833px]" />
        <Minimized title="LKZ  Д..." place="left-[480px] top-[833px]" />
        <Minimized title="SI  2 ч..." place="left-[641px] top-[831px]" />
        <Minimized title="GZZ  2..." place="left-[960px] top-[833px]" />
        <Minimized title="MXZ  2..." place="left-[1120px] top-[833px]" />
      </main>

      <div className={`flex h-[24px] shrink-0 items-start border-b border-[#716f64] pl-[3px] ${GRID}`} role="tablist">
        {tabs.map((t) => (
          <button
            key={t}
            type="button"
            role="tab"
            aria-selected={t === "FORTS"}
            className={`border-r border-r-[#716f64] px-[5px] ${
              t === "FORTS" ? "h-[21px] border-l border-l-white pb-[2px]" : "mt-[2px] h-[19px] border-b border-b-[#aca899] pt-[2px]"
            }`}
          >
            {t}
          </button>
        ))}
      </div>

      <footer className="flex h-[20px] shrink-0 items-center gap-[3px] border-t border-white pt-px whitespace-nowrap">
        <div className="flex h-[18px] flex-1 items-center border-t border-[#aca899] pl-px">
          Время сервера: 21:46:29; последняя полученная запись: 3447341
        </div>
        <div className="flex h-[18px] w-[139px] items-center gap-[4px] border-t border-l border-[#aca899]">
          <Svg>
            <path fill="#808080" stroke="#000" d="M1.500 1.500h5v4h-5zM1.500 9.500h5v4h-5z" />
            <path fill="#0ff" d="M2 2h4v3H2zM2 10h4v3H2z" />
            <path stroke="#00c" d="M7 15.500h6v-4" />
            <path stroke="#000" d="M0 7.500h9l2-2M0 15.500h6" />
            <path fill="#eed" stroke="#000" d="M10.500 5.500h4v4h-4z" />
          </Svg>
          10.21.133.155:15100
        </div>
        <div className="h-[18px] w-[77px] border-t border-l border-[#aca899]" />
        <div className="h-[18px] w-[22px] border-t border-l border-[#aca899]" />
        <div className="h-[18px] w-[22px] border-t border-l border-[#aca899]" />
        <div className="flex h-[18px] w-[94px] items-center gap-[7px] border-t border-l border-[#aca899] pl-[4px]">
          <i className="size-[10px] rounded-full bg-[#00f000]" />
          22.11.2012
        </div>
      </footer>

      <div className="flex h-[30px] shrink-0 items-center bg-[linear-gradient(#4a8cf0,#2a66e0_12%,#245edb_50%,#245edb_85%,#1941a5)]">
        <button
          type="button"
          className="flex h-full w-[97px] shrink-0 items-center gap-[4px] rounded-r-[10px] bg-[linear-gradient(#6fc06f,#3c983c_15%,#388e38_50%,#40a040_85%,#2c702c)] pl-[9px] font-['Open_Sans',sans-serif] text-[17px] leading-[20px] font-bold text-white italic shadow-[inset_-3px_0_5px_#2a702a] [text-shadow:1px_1px_2px_#1c4a1c]"
        >
          <svg viewBox="0 0 20 18" className="h-[20px] w-[22px]" aria-hidden>
            <path fill="#ee5a2a" d="M3 3c3-2 4-1 6 0L7.700 8.500c-2-1-3-2-6 0z" />
            <path fill="#7fc43a" d="M10.500 3.500c3 1 4 2 7.500 0l-1.500 5.500c-3 2-5 1-7.500 0z" />
            <path fill="#5a8ef0" d="M1.300 10c3-2 4-1 6 0L6 15.500c-2-1-3-2-6 0z" />
            <path fill="#f8cc2c" d="M8.700 10.500c3 1 4 2 7.500 0L14.700 16c-3 2-5 1-7.500 0z" />
          </svg>
          start
        </button>
        <div className="flex w-[61px] shrink-0 items-center gap-[7px] pl-[12px]">
          <Chrome />
          <svg viewBox="0 0 16 16" className="size-4" aria-hidden>
            <rect x="2" y="3" width="11" height="12" rx="2" fill="#3a9ae0" />
            <path fill="#e8f4ff" d="M5 4h8v8l-3 2H4z" />
            <path stroke="#2a70c0" fill="none" strokeWidth="1.500" d="M6 8l2 2 6-8M6 12h4" />
          </svg>
        </div>
        <div className="flex min-w-0 flex-1 gap-[2px]">
          <TaskButton
            icon={
              <svg viewBox="0 0 16 16" className="size-4 shrink-0" fill="none" aria-hidden>
                <rect width="16" height="16" rx="1" fill="#fbf6e4" />
                <path stroke="#e07030" d="M1 6l3-3 3 3 3-3 4 4" />
                <path stroke="#d04040" d="M1 9l3-3 3 3 3-3 4 4" />
                <path stroke="#48a048" d="M1 13l3-3 3 3 3-3 4 4" />
              </svg>
            }
            label="6304433: Alpari NZ M..."
          />
          <TaskButton icon={<Quik />} label="[4F8BC  UID: 21601] ..." pressed />
          <TaskButton
            icon={
              <svg viewBox="0 0 16 16" className="size-4 shrink-0" aria-hidden>
                <path fill="#f8b020" stroke="#7a4a08" d="M9 1l-7 8h4l-2 6 4-3 7-8h-4l2-3z" />
                <path stroke="#444" strokeWidth="1.500" d="M5 11l7-7" />
              </svg>
            }
            label="36. Kiwa - Up In Smo..."
          />
          <TaskButton icon={<Chrome />} label="Два.ч — Бизнес - - G..." />
          <TaskButton icon={<Chrome />} label="Новая вкладка - Go..." />
          <TaskButton
            icon={
              <svg viewBox="0 0 16 16" className="size-4 shrink-0" aria-hidden>
                <path fill="#e8c050" stroke="#a07818" d="M1.500 2.500h5l1 2h6v10h-12z" />
                <path fill="#fbe88c" stroke="#a07818" d="M1.500 14.500l2-8h12l-2 8z" />
              </svg>
            }
            label="Downloads"
          />
        </div>
        <span className="mr-[20px] bg-[#2f63c8] px-px py-[2px] text-white">EN</span>
        <div className="relative flex h-full w-[57px] shrink-0 items-center border-l border-[#0c58b0] bg-[linear-gradient(#3ab4f8,#149ae8_15%,#0f90e4_80%,#0c74c8)] pl-[15px] text-white">
          <button
            type="button"
            aria-label="Показать значки"
            className="absolute -left-[9px] flex size-[18px] items-center justify-center rounded-full border border-[#7ac8f8] bg-[#1a78d8]"
          >
            <svg viewBox="0 0 8 10" className="h-[10px] w-[8px]" fill="none" stroke="#fff" strokeWidth="2" aria-hidden>
              <path d="M6 1L2 5l4 4" />
            </svg>
          </button>
          21:46
        </div>
      </div>
    </div>
  );
}
